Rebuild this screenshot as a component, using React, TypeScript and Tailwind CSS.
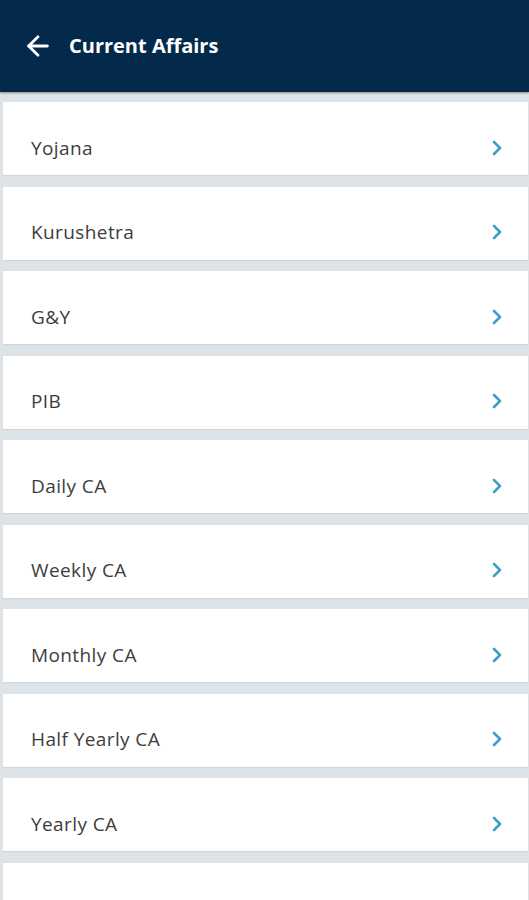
import { ArrowLeft } from "lucide-react";

const items = [
  "Yojana",
  "Kurushetra",
  "G&Y",
  "PIB",
  "Daily CA",
  "Weekly CA",
  "Monthly CA",
  "Half Yearly CA",
  "Yearly CA",
  "",
];

function Chevron() {
  return (
    <svg width="12" height="18" viewBox="0 0 12 18" fill="none">
      <path
        d="M3 3l6 6-6 6"
        stroke="#3d9fc6"
        strokeWidth="2.6"
        strokeLinecap="round"
        strokeLinejoin="round"
      />
    </svg>
  );
}

export default function App() {
  return (
    <div className="h-[900px] overflow-hidden bg-[#dde3e6] font-['Open_Sans',sans-serif]">
      <header className="flex h-[92px] items-center gap-[15px] bg-[#032a4b] pl-[22px] shadow-[0_1px_2px_rgba(0,0,0,0.4)]">
        <ArrowLeft className="h-[32px] w-[32px] text-white" strokeWidth={2.1} />
        <h1 className="text-[20px] font-bold text-white">Current Affairs</h1>
      </header>
      <div className="flex flex-col gap-[11.5px] pt-[10px]">
        {items.map((item, i) => (
          <div
            key={i}
            className="ml-[3px] mr-[1px] flex h-[73px] shrink-0 items-center justify-between bg-white pl-[28px] pr-[25px] pt-[18px] shadow-[0_1px_1px_rgba(0,0,0,0.06)]"
          >
            <span className="text-[19px] leading-[24px] tracking-[0.4px] text-[#3d3d3d]">
              {item}
            </span>
            {item && <Chevron />}
          </div>
        ))}
      </div>
    </div>
  );
}
